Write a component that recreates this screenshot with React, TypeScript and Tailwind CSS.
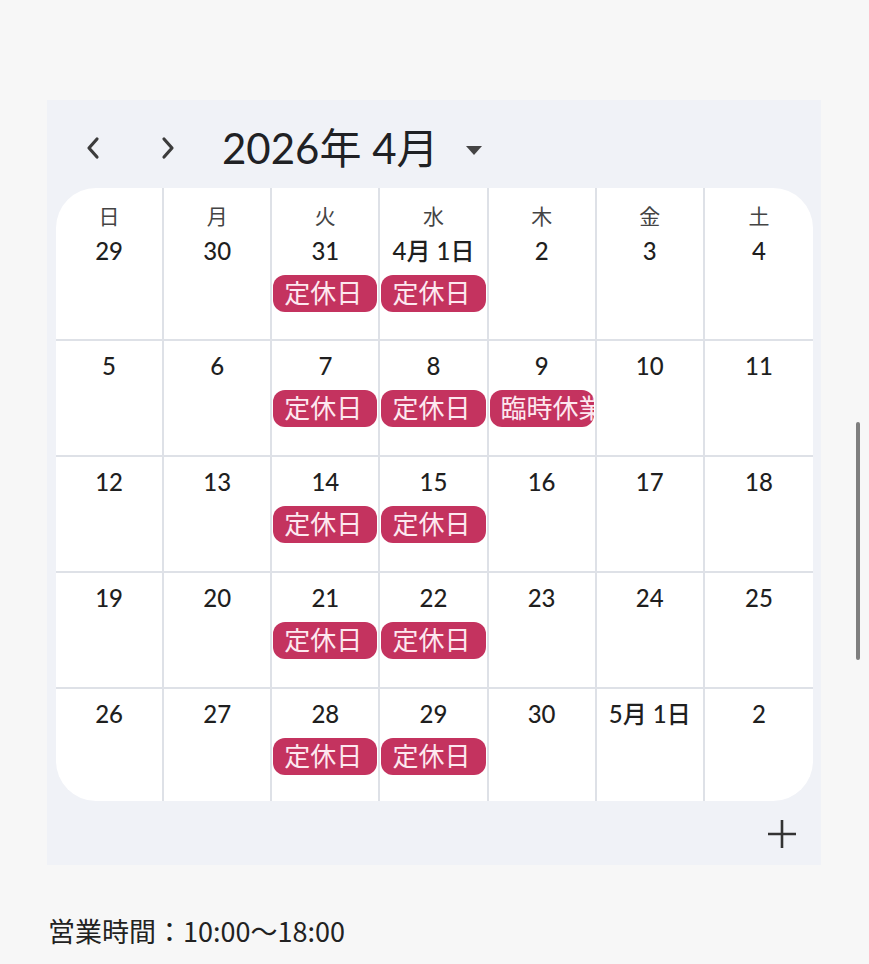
const weekdays = ['日', '月', '火', '水', '木', '金', '土'];

type Day = { label: string; chip?: string };

const weeks: Day[][] = [
  [
    { label: '29' },
    { label: '30' },
    { label: '31', chip: '定休日' },
    { label: '4月 1日', chip: '定休日' },
    { label: '2' },
    { label: '3' },
    { label: '4' },
  ],
  [
    { label: '5' },
    { label: '6' },
    { label: '7', chip: '定休日' },
    { label: '8', chip: '定休日' },
    { label: '9', chip: '臨時休業' },
    { label: '10' },
    { label: '11' },
  ],
  [
    { label: '12' },
    { label: '13' },
    { label: '14', chip: '定休日' },
    { label: '15', chip: '定休日' },
    { label: '16' },
    { label: '17' },
    { label: '18' },
  ],
  [
    { label: '19' },
    { label: '20' },
    { label: '21', chip: '定休日' },
    { label: '22', chip: '定休日' },
    { label: '23' },
    { label: '24' },
    { label: '25' },
  ],
  [
    { label: '26' },
    { label: '27' },
    { label: '28', chip: '定休日' },
    { label: '29', chip: '定休日' },
    { label: '30' },
    { label: '5月 1日' },
    { label: '2' },
  ],
];

const font = "font-['Lato','Noto_Sans_CJK_JP',sans-serif]";

export default function App() {
  return (
    <div className={`relative min-h-[964px] bg-[#f7f7f7] pt-[100px] ${font}`}>
      <div className="ml-[47px] w-[774px] bg-[#f0f2f7] pl-[9px] pr-[8px]">
        {/* month header */}
        <div className="flex h-[88px] items-center pt-[8px]">
          <button className="ml-[29px] text-[#3c3c3c]">
            <svg width="16" height="24" viewBox="0 0 16 24">
              <polyline points="12,3 4,12 12,21" fill="none" stroke="currentColor" strokeWidth="3.2" strokeLinecap="round" strokeLinejoin="round" />
            </svg>
          </button>
          <button className="ml-[59px] text-[#3c3c3c]">
            <svg width="16" height="24" viewBox="0 0 16 24">
              <polyline points="4,3 12,12 4,21" fill="none" stroke="currentColor" strokeWidth="3.2" strokeLinecap="round" strokeLinejoin="round" />
            </svg>
          </button>
          <div className="ml-[46px] text-[42px] leading-none text-[#202124]">2026年 4月</div>
          <svg className="ml-[26px] mt-[4px]" width="18" height="9" viewBox="0 0 18 9">
            <path d="M1 0 L17 0 L9 9 Z" fill="#444" />
          </svg>
        </div>

        <div className="grid grid-cols-7 overflow-hidden rounded-[40px] bg-white">
          {weeks.map((week, wi) =>
            week.map((day, di) => (
              <div
                key={`${wi}-${di}`}
                className={`flex flex-col items-center px-[1px] ${
                  wi === 0 ? 'h-[153px] pt-[12px]' : wi === 4 ? 'h-[112px] pt-[11px]' : 'h-[116px] pt-[11px]'
                } ${wi < 4 ? 'border-b-2 border-b-[#dee1e7]' : ''} ${
                  di < 6 ? 'border-r-2 border-r-[#dee1e7]' : ''
                }`}
              >
                {wi === 0 && (
                  <div className="text-[21px] leading-[32px] text-[#444]">{weekdays[di]}</div>
                )}
                <div
                  className={`whitespace-nowrap text-[24px] font-medium leading-[28px] text-[#1f1f1f] ${
                    wi === 0 ? 'mt-[5px]' : ''
                  }`}
                >
                  {day.label}
                </div>
                {day.chip && (
                  <div className="mt-[10px] h-[37px] w-full overflow-hidden whitespace-nowrap rounded-[12px] bg-[#c4335f] pl-[11px] text-[26px] leading-[37px] text-[#fde8ef]">
                    {day.chip}
                  </div>
                )}
              </div>
            ))
          )}
        </div>

        <div className="flex h-[64px] items-center justify-end pr-[16px]">
          <svg width="30" height="30" viewBox="0 0 30 30" className="mt-[2px]">
            <path d="M15 1 V29 M1 15 H29" stroke="#333" strokeWidth="2.6" />
          </svg>
        </div>
      </div>

      <div className="ml-[48px] mt-[50px] text-[27px] leading-[32px] text-[#222] font-['Noto_Sans_CJK_JP',sans-serif]">
        営業時間：10:00〜18:00
      </div>

      <div className="absolute right-[9px] top-[422px] h-[238px] w-[4px] rounded-full bg-[#7f7f7f]" />
    </div>
  );
}
